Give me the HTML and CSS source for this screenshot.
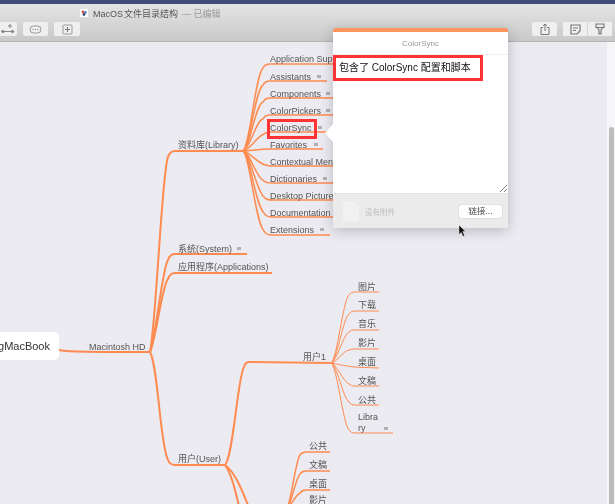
FILE: index.html
```html
<!DOCTYPE html>
<html lang="en">

<head>
    <meta charset="UTF-8">
    <meta name="viewport" content="width=device-width, initial-scale=1.0">
    <title>MacOS 文件目录结构</title>

    <link rel="stylesheet" href="styles.css">
</head>

<body>
    <div class="window">
        <!-- Toolbar -->
        <div class="toolbar">
            <div class="title-row">
                <svg class="doc-icon" width="8" height="8" viewBox="0 0 8 8">
                    <rect width="8" height="8" fill="#fff" />
                    <circle cx="3" cy="3" r="1.4" fill="#d9534f" />
                    <circle cx="5.4" cy="3.4" r="1.3" fill="#4a7fc1" />
                    <circle cx="4" cy="5.5" r="1.4" fill="#3a4f7a" />
                </svg>
                <span class="doc-name">MacOS 文件目录结构</span>
                <span class="doc-state">— 已编辑</span>
            </div>
            <div class="tool-row">
                <div class="tool-group">
                    <div class="tool-btn tool-first">
                        <svg width="14" height="12" viewBox="0 0 14 12" fill="none" stroke="#888">
                            <path d="M9 1v4M7 3h4M0 8.500h13" />
                            <circle cx="2" cy="8.500" r="1.200" fill="#888" />
                            <circle cx="11.500" cy="8.500" r="1.200" fill="#888" />
                        </svg>
                    </div>
                    <div class="tool-btn">
                        <svg width="13" height="9" viewBox="0 0 13 9" fill="none" stroke="#999">
                            <rect x="1" y="1" width="11" height="7" rx="3.500" />
                            <path d="M3.500 4.500h1M6 4.500h1M8.500 4.500h1" stroke="#777" />
                        </svg>
                    </div>
                    <div class="tool-btn tool-last">
                        <svg width="11" height="11" viewBox="0 0 11 11" fill="none" stroke="#999">
                            <rect x="1" y="1" width="9" height="9" rx="1" />
                            <path d="M5.500 3v5M3 5.500h5" stroke="#777" />
                        </svg>
                    </div>
                </div>
                <div class="tool-group tool-group-right">
                    <div class="tool-btn">
                        <svg width="10" height="12" viewBox="0 0 10 12" fill="none" stroke="#777">
                            <path d="M3 4.500H1v7h8v-7H7M5 8V1M3 2.800L5 1l2 1.800" />
                        </svg>
                    </div>
                    <div class="tool-pair">
                        <div class="pair-btn">
                            <svg width="11" height="11" viewBox="0 0 11 11" fill="none" stroke="#777" stroke-width="1.200">
                                <path d="M1 1h9v6l-3 3H1zM3 4h5M3 6.500h3" />
                            </svg>
                        </div>
                        <div class="pair-btn">
                            <svg width="10" height="12" viewBox="0 0 10 12" fill="none" stroke="#777" stroke-width="1.200">
                                <path d="M1 1h8v3.500H1zM2 4.500l2 2.500v4h2V7l2-2.500" />
                            </svg>
                        </div>
                    </div>
                </div>
            </div>
        </div>

        <!-- Mind map canvas -->
        <div class="canvas">
            <svg class="map" width="615" height="462" viewBox="0 0 615 462">
                <g transform="translate(0 -42)">
                    <!-- branches -->
                    <g class="branch thick">
                        <path d="M59 350C70 352 90 352 150 352" />
                        <path d="M150 352C156 325 162 170 168 157Q170 151 175 151L243 151" />
                        <path d="M150 352C156 335 163 265 168 260Q170 254 175 254L247 254" />
                        <path d="M150 352C156 340 162 285 168 279Q170 273 175 273L272 273" />
                        <path d="M150 352C158 365 160 445 168 460Q170 465 175 465L225 465" />
                        <path d="M225 465C233 458 238 375 244 367Q245 362 250 362L331 363" />
                        <path d="M225 465C232 475 235 490 240 510" />
                        <path d="M225 465C235 472 242 490 250 510" />
                    </g>
                    <g class="branch">
                        <path d="M243 151C250 146 255 76 263 68Q265 64 270 64L340 64" />
                        <path d="M243 151C250 147 255 90 263 85Q265 81 270 81L327 81" />
                        <path d="M243 151C250 148 255 105 263 102Q265 98 270 98L340 98" />
                        <path d="M243 151C250 149 256 120 263 119Q265 115 270 115L340 115" />
                        <path d="M243 151C250 150 258 135 264 134Q266 132 270 132L327 132" />
                        <path d="M243 151C250 151 258 149 270 149L323 149" />
                        <path d="M243 151C250 152 258 164 266 165Q268 166 272 166L340 166" />
                        <path d="M243 151C250 152 256 178 264 181Q266 183 272 183L340 183" />
                        <path d="M243 151C250 153 256 190 264 197Q266 200 272 200L340 200" />
                        <path d="M243 151C250 154 255 205 264 213Q266 217 272 217L340 217" />
                        <path d="M243 151C250 155 255 222 264 231Q266 235 272 235L330 235" />
                        <path d="M287 510C292 495 296 460 300 455Q302 452 306 452L330 452" />
                        <path d="M287 510C292 500 296 478 300 474Q302 471 306 471L330 471" />
                        <path d="M287 510C292 503 296 495 300 493Q302 490 306 490L330 490" />
                    </g>
                    <g class="branch thin">
                        <path d="M331 363C337 360 343 300 349 295Q351 292 354 292L379 292" />
                        <path d="M331 363C337 361 343 318 349 314Q351 311 354 311L379 311" />
                        <path d="M331 363C337 361 343 335 349 332Q351 330 354 330L379 330" />
                        <path d="M331 363C337 362 343 351 349 350Q351 349 354 349L379 349" />
                        <path d="M331 363C337 364 345 366 354 367L379 368" />
                        <path d="M331 363C337 365 343 381 349 384Q351 386 354 386L379 386" />
                        <path d="M331 363C337 365 343 398 349 402Q351 405 354 405L379 405" />
                        <path d="M331 363C337 366 343 424 349 430Q351 433 354 433L393 433" />
                    </g>

                    <!-- root -->
                    <rect class="root-box" x="-12" y="332" width="71" height="28" rx="5" />
                    <text class="root-label" x="50" y="350" text-anchor="end">gMacBook</text>

                    <!-- level 1 and 2 labels -->
                    <g class="label">
                        <text x="89" y="349.500">Macintosh HD</text>
                        <text x="178" y="147.500">资料库(Library)</text>
                        <text x="178" y="251.500">系统(System)</text>
                        <text x="178" y="270">应用程序(Applications)</text>
                        <text x="178" y="461.500">用户(User)</text>
                        <text x="303" y="359.500">用户1</text>

                        <text x="270" y="62">Application Support</text>
                        <text x="270" y="79.500">Assistants</text>
                        <text x="270" y="96.500">Components</text>
                        <text x="270" y="113.500">ColorPickers</text>
                        <text x="270" y="130.500">ColorSync</text>
                        <text x="270" y="147.500">Favorites</text>
                        <text x="270" y="164.500">Contextual Menu</text>
                        <text x="270" y="181.500">Dictionaries</text>
                        <text x="270" y="198.500">Desktop Pictures</text>
                        <text x="270" y="215.500">Documentation</text>
                        <text x="270" y="232.500">Extensions</text>

                        <text x="358" y="289.500">图片</text>
                        <text x="358" y="308">下载</text>
                        <text x="358" y="327">音乐</text>
                        <text x="358" y="346">影片</text>
                        <text x="358" y="365">桌面</text>
                        <text x="358" y="384">文稿</text>
                        <text x="358" y="403">公共</text>
                        <text x="358" y="420">Libra</text>
                        <text x="358" y="431">ry</text>

                        <text x="309" y="448.500">公共</text>
                        <text x="309" y="467.500">文稿</text>
                        <text x="309" y="486.500">桌面</text>
                        <text x="309" y="503">影片</text>
                    </g>

                    <!-- note markers -->
                    <g class="note-mark">
                        <rect x="317" y="75" width="4" height="3" />
                        <rect x="326" y="92" width="4" height="3" />
                        <rect x="326" y="109" width="4" height="3" />
                        <rect x="318" y="126" width="4" height="3" />
                        <rect x="314" y="143" width="4" height="3" />
                        <rect x="323" y="177" width="4" height="3" />
                        <rect x="320" y="228" width="4" height="3" />
                        <rect x="237" y="247" width="4" height="3" />
                        <rect x="384" y="427" width="4" height="3" />
                    </g>

                    <rect class="mark" x="268.500" y="120.500" width="47" height="17" />
                </g>
            </svg>

            <!-- Note popover -->
            <div class="popover">
                <div class="popover-title">ColorSync</div>
                <div class="popover-body">
                    <div class="note-text">包含了 ColorSync 配置和脚本</div>
                    <svg class="resize" width="7" height="7" viewBox="0 0 7 7" stroke="#888" fill="none">
                        <path d="M0 7L7 0M4 7L7 4" />
                    </svg>
                </div>
                <div class="popover-foot">
                    <svg width="16" height="20" viewBox="0 0 16 20">
                        <path d="M0 0H11L16 5V20H0Z" fill="#f1f1f1" />
                    </svg>
                    <span class="no-file">没有附件</span>
                    <button class="link-btn">链接...</button>
                </div>
                <div class="popover-arrow"></div>
            </div>

            <svg class="cursor" width="7" height="12" viewBox="0 0 7 12">
                <path d="M0 0L6.500 6.500H3.800L5.500 10.500L4 11.500L2.300 7.500L0 9.500Z" fill="#111" stroke="#fff" stroke-width=".4" />
            </svg>

            <div class="scroll-track">
                <div class="scroll-thumb"></div>
            </div>
        </div>
    </div>
</body>

</html>
```

FILE: styles.css
```css
* {
    box-sizing: border-box;
}

html, body {
    margin: 0;
    height: 100%;
    overflow: hidden;
}

body {
    font-family: "Liberation Sans", "Noto Sans CJK SC", sans-serif;
}

.window {
    display: flex;
    flex-direction: column;
    width: 615px;
    height: 504px;
    overflow: hidden;
    filter: blur(0.4px);
}

/* toolbar */
.toolbar {
    height: 42px;
    border-top: 4px solid #3f4b78;
    border-bottom: 1px solid #b4b4b4;
    background: linear-gradient(#e4e4e4, #c9c9c9);
}

.title-row {
    display: flex;
    align-items: center;
    gap: 5px;
    height: 18px;
    padding-left: 80px;
    font-size: 9px;
}

.doc-name {
    color: #555;
    word-spacing: -1.500px;
}

.doc-state {
    margin-left: -1px;
    color: #9a9a9a;
}

.tool-row {
    display: flex;
    justify-content: space-between;
}

.tool-group {
    display: flex;
    gap: 6px;
}

.tool-group-right {
    margin-right: 3px;
}

.tool-btn {
    display: flex;
    align-items: center;
    justify-content: center;
    width: 25px;
    height: 14px;
    border-radius: 2px;
    background: #efefef;
}

.tool-first {
    width: 27px;
    margin-left: -10px;
    padding-left: 8px;
}

.tool-last {
    width: 26px;
}

.tool-pair {
    display: flex;
    gap: 1px;
    border-radius: 2px;
    background: #d4d4d4;
}

.pair-btn {
    display: flex;
    align-items: center;
    justify-content: center;
    width: 24px;
    height: 14px;
    background: #efefef;
}

/* canvas */
.canvas {
    position: relative;
    flex: 1;
    background: #ebebf1;
}

.map {
    display: block;
}

.branch {
    fill: none;
    stroke: #ff8b50;
    stroke-width: 1.500;
}

.branch.thick {
    stroke-width: 2;
}

.branch.thin {
    stroke-width: 1;
}

.root-box {
    fill: #fff;
}

.root-label {
    font-size: 11px;
    fill: #333;
}

.label {
    font-size: 9px;
    fill: #555;
}

.note-mark {
    fill: #b0b0b0;
}

.mark {
    fill: none;
    stroke: #ff3333;
    stroke-width: 3;
}

/* popover */
.popover {
    position: absolute;
    left: 333px;
    top: -14px;
    display: flex;
    flex-direction: column;
    width: 175px;
    height: 200px;
    border-top: 4px solid #ff9560;
    border-radius: 3px;
    background: #fff;
    box-shadow: 0 3px 14px rgba(0, 0, 0, 0.22);
}

.popover-title {
    height: 23px;
    border-bottom: 1px solid #f0f0f0;
    color: #999;
    font-size: 8px;
    line-height: 23px;
    text-align: center;
}

.popover-body {
    position: relative;
    flex: 1;
}

.note-text {
    width: 150px;
    height: 26px;
    padding-left: 3px;
    border: 3px solid #ff3333;
    color: #111;
    font-size: 10px;
    line-height: 19px;
    white-space: nowrap;
}

.resize {
    position: absolute;
    right: 1px;
    bottom: 1px;
}

.popover-foot {
    display: flex;
    align-items: center;
    height: 35px;
    padding: 0 6px 0 10px;
    border-top: 1px solid #e2e2e2;
    border-radius: 0 0 3px 3px;
    background: #ebebeb;
}

.no-file {
    flex: 1;
    margin-left: 6px;
    color: #bcbcbc;
    font-size: 7.500px;
}

.link-btn {
    width: 43px;
    height: 13px;
    padding: 0;
    border: 0;
    border-radius: 2px;
    background: #fff;
    box-shadow: 0 0 1px rgba(0, 0, 0, 0.4);
    color: #444;
    font-family: inherit;
    font-size: 8.500px;
    line-height: 13px;
}

.popover-arrow {
    position: absolute;
    left: -8px;
    top: 92px;
    width: 0;
    height: 0;
    border-top: 9px solid transparent;
    border-bottom: 9px solid transparent;
    border-right: 8px solid #fff;
}

.cursor {
    position: absolute;
    left: 459px;
    top: 183px;
}

/* scrollbar */
.scroll-track {
    position: absolute;
    right: 0;
    top: 0;
    bottom: 0;
    width: 8px;
    padding: 85px 1px 0 2px;
    background: #f6f6f8;
}

.scroll-thumb {
    height: 100%;
    border-radius: 3px 3px 0 0;
    background: #bcbcbc;
}
```
